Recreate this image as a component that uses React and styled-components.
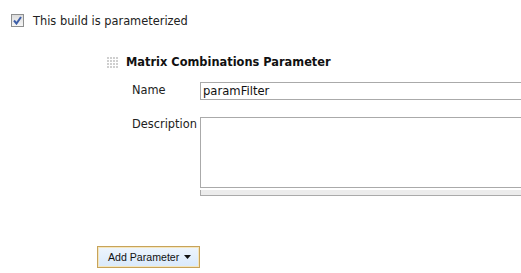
import React from 'react';
import styled, { createGlobalStyle } from 'styled-components';

const GlobalStyle = createGlobalStyle`
  html, body {
    margin: 0;
    padding: 0;
    background: #fff;
    overflow: hidden;
  }
  body {
    font-family: "DejaVu Sans", Verdana, sans-serif;
    font-size: 11.4px;
    color: #222;
  }
`;

const Page = styled.div`
  width: 521px;
  height: 273px;
  overflow: hidden;
  padding-top: 14px;
  box-sizing: border-box;
`;

const CheckRow = styled.label`
  display: flex;
  align-items: center;
  gap: 9px;
  padding-left: 11px;
  height: 13px;
`;

const Box = styled.span`
  width: 11px;
  height: 11px;
  border: 1px solid #8e8f8f;
  background: linear-gradient(#dcdcdc, #f6f6f6);
  display: flex;
  align-items: center;
  justify-content: center;
`;

const Block = styled.div`
  margin-top: 28px;
  padding-left: 107px;
`;

const TitleRow = styled.div`
  display: flex;
  align-items: center;
  gap: 8px;
  height: 14px;
`;

const Title = styled.span`
  font-weight: bold;
  color: #111;
`;

const Fields = styled.div`
  margin-top: 13px;
  padding-left: 25px;
  display: grid;
  grid-template-columns: 68px 340px;
`;

const Label = styled.div`
  padding-top: ${({ top }) => top || 0}px;
  color: #222;
`;

const TextInput = styled.div`
  height: 16px;
  border: 1px solid #aaa;
  border-right: none;
  padding: 0 2px;
  line-height: 17px;
  font-size: 11.6px;
  color: #111;
  margin-bottom: 17px;
`;

const TextArea = styled.div`
  height: 69px;
  border: 1px solid #aaa;
  border-right: none;
`;

const Grip = styled.div`
  margin-top: 2px;
  height: 5px;
  background: #ececec;
  border-left: 1px solid #aaa;
  border-bottom: 1px solid #aaa;
`;

const ButtonRow = styled.div`
  margin-top: 50px;
  padding-left: 97px;
`;

const Button = styled.button`
  display: flex;
  align-items: center;
  gap: 5px;
  height: 22px;
  padding: 0 8px 0 10px;
  border: 1px solid #c7a35a;
  box-shadow: inset 0 0 0 1px #f5e6bd;
  background: linear-gradient(#eef5fd, #d9e9fb);
  font-family: "Liberation Sans", Arial, sans-serif;
  font-size: 10.6px;
  color: #111;
`;

const Handle = () => (
  <svg width="11" height="11" viewBox="0 0 11 11">
    {[0, 3, 6, 9].flatMap((y) =>
      [0, 3, 6, 9].map((x) => (
        <rect key={`${x}-${y}`} x={x} y={y} width="2" height="2" fill="#cfcfcf" />
      ))
    )}
  </svg>
);

const App = () => (
  <>
    <GlobalStyle />
    <Page>
      <CheckRow>
        <Box>
          <svg width="9" height="9" viewBox="0 0 9 9">
            <path d="M1 4.5 L3.5 7.5 L8 1" stroke="#3d5ea8" strokeWidth="2" fill="none" />
          </svg>
        </Box>
        <span>This build is parameterized</span>
      </CheckRow>

      <Block>
        <TitleRow>
          <Handle />
          <Title>Matrix Combinations Parameter</Title>
        </TitleRow>
        <Fields>
          <Label top={1}>Name</Label>
          <TextInput>paramFilter</TextInput>
          <Label top={0}>Description</Label>
          <div>
            <TextArea />
            <Grip />
          </div>
        </Fields>
      </Block>

      <ButtonRow>
        <Button>
          Add Parameter
          <svg width="7" height="4" viewBox="0 0 7 4">
            <path d="M0 0 L7 0 L3.5 4 Z" fill="#111" />
          </svg>
        </Button>
      </ButtonRow>
    </Page>
  </>
);

export default App;
